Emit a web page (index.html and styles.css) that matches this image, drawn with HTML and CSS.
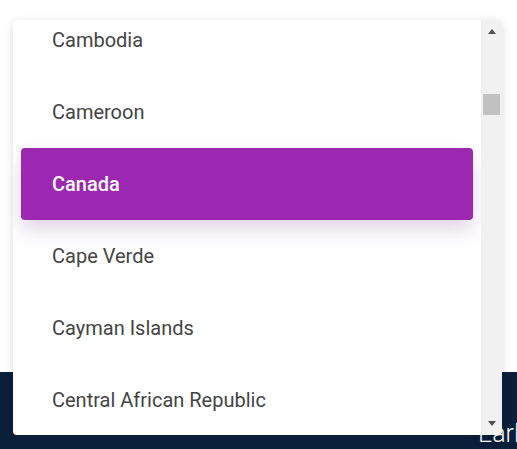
FILE: index.html
```html
<!DOCTYPE html>
<html lang="en">
<head>
  <meta charset="UTF-8" />
  <meta name="viewport" content="width=device-width, initial-scale=1.0" />
  <title>Country select</title>
  <link rel="stylesheet" href="styles.css">
</head>
<body>
  <div class="page">
    <section class="intro"></section>
    <section class="band">
      <h2>Early access</h2>
    </section>
  </div>

  <div class="dropdown">
    <ul class="options">
      <li class="option">Cambodia</li>
      <li class="option">Cameroon</li>
      <li class="option selected">Canada</li>
      <li class="option">Cape Verde</li>
      <li class="option">Cayman Islands</li>
      <li class="option">Central African Republic</li>
    </ul>
    <div class="scrollbar">
      <span class="arrow up"></span>
      <div class="track">
        <div class="thumb"></div>
      </div>
      <span class="arrow down"></span>
    </div>
  </div>
</body>
</html>
```

FILE: styles.css
```css
body {
  margin: 0;
  font-family: Roboto, 'Liberation Sans', Arial, sans-serif;
  background: #fff;
  overflow: hidden;
  height: 449px;
}
.page {
  display: flex;
  flex-direction: column;
  height: 100%;
}
.intro {
  height: 372px;
  background: #fff;
}
.band {
  flex: 1;
  background: #0b1f3b;
  padding-left: 478px;
  overflow: hidden;
}
.band h2 {
  margin: 47px 0 0;
  font-weight: 300;
  font-size: 25px;
  color: #fff;
  white-space: nowrap;
}
.dropdown {
  position: absolute;
  left: 13px;
  top: 20px;
  width: 489px;
  height: 415px;
  background: #fff;
  border-radius: 4px;
  box-shadow: 0 2px 10px rgba(0,0,0,0.15);
  display: flex;
  overflow: hidden;
}
.options {
  flex: 1;
  list-style: none;
  margin: -16px 0 0;
  padding: 0;
}
.option {
  height: 72px;
  margin: 0 8px;
  padding-left: 31px;
  display: flex;
  align-items: center;
  font-size: 20px;
  color: #444;
  border-radius: 4px;
}
.option.selected {
  background: #9c27b0;
  color: #fff;
  font-weight: 500;
  box-shadow: 0 10px 20px rgba(110,40,130,0.2);
}
.scrollbar {
  width: 21px;
  background: #f1f1f1;
  display: flex;
  flex-direction: column;
  align-items: center;
}
.arrow {
  width: 0;
  height: 0;
  border-left: 4.5px solid transparent;
  border-right: 4.5px solid transparent;
}
.arrow.up {
  margin-top: 9px;
  border-bottom: 5px solid #505050;
}
.arrow.down {
  margin-bottom: 9px;
  border-top: 5px solid #505050;
}
.track {
  flex: 1;
  width: 100%;
  padding: 0 2px;
  box-sizing: border-box;
}
.thumb {
  margin-top: 60px;
  height: 21px;
  background: #c1c1c1;
}
```
